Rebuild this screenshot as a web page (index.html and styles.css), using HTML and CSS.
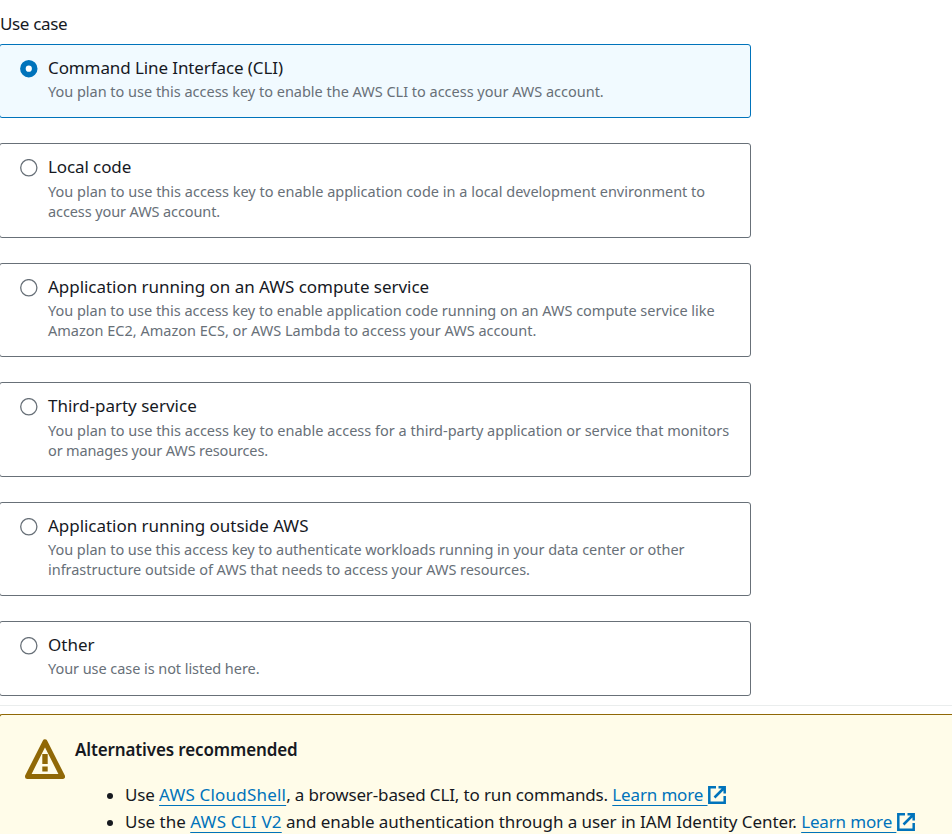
FILE: index.html
```html
<!DOCTYPE html>
<html lang="en">
<head>
<meta charset="utf-8">
<title>Access key use case</title>
<link rel="stylesheet" href="styles.css">
</head>
<body>
<main class="page">
  <div class="field-label">Use case</div>
  <div class="tiles">
    <div class="tile selected">
      <svg class="radio" viewBox="0 0 18 18"><circle cx="8.800" cy="8.700" r="5.900" fill="#fff" stroke="#0073bb" stroke-width="5.600"/></svg>
      <div class="copy">
        <div class="title tight">Command Line Interface (CLI)</div>
        <div class="desc slight">You plan to use this access key to enable the AWS CLI to access your AWS account.</div>
      </div>
    </div>
    <div class="tile">
      <svg class="radio" viewBox="0 0 18 18"><circle cx="8.800" cy="8.700" r="8.100" fill="#fff" stroke="#687078" stroke-width="1.300"/></svg>
      <div class="copy">
        <div class="title tight">Local code</div>
        <div class="desc">You plan to use this access key to enable application code in a local development environment to<br><span class="tight">access your AWS account.</span></div>
      </div>
    </div>
    <div class="tile">
      <svg class="radio" viewBox="0 0 18 18"><circle cx="8.800" cy="8.700" r="8.100" fill="#fff" stroke="#687078" stroke-width="1.300"/></svg>
      <div class="copy">
        <div class="title snug">Application running on an AWS compute service</div>
        <div class="desc"><span class="slight">You plan to use this access key to enable application code running on an AWS compute service like</span><br>Amazon EC2, Amazon ECS, or AWS Lambda to access your AWS account.</div>
      </div>
    </div>
    <div class="tile">
      <svg class="radio" viewBox="0 0 18 18"><circle cx="8.800" cy="8.700" r="8.100" fill="#fff" stroke="#687078" stroke-width="1.300"/></svg>
      <div class="copy">
        <div class="title">Third-party service</div>
        <div class="desc">You plan to use this access key to enable access for a third-party application or service that monitors<br><span class="tighter">or manages your AWS resources.</span></div>
      </div>
    </div>
    <div class="tile">
      <svg class="radio" viewBox="0 0 18 18"><circle cx="8.800" cy="8.700" r="8.100" fill="#fff" stroke="#687078" stroke-width="1.300"/></svg>
      <div class="copy">
        <div class="title snug">Application running outside AWS</div>
        <div class="desc snug">You plan to use this access key to authenticate workloads running in your data center or other<br>infrastructure outside of AWS that needs to access your AWS resources.</div>
      </div>
    </div>
    <div class="tile">
      <svg class="radio" viewBox="0 0 18 18"><circle cx="8.800" cy="8.700" r="8.100" fill="#fff" stroke="#687078" stroke-width="1.300"/></svg>
      <div class="copy">
        <div class="title">Other</div>
        <div class="desc close">Your use case is not listed here.</div>
      </div>
    </div>
  </div>
  <hr class="divider">
  <section class="alert">
    <svg class="warn" viewBox="0 0 40 40"><path d="M20 2.800 37.500 37.500h-35Z" fill="none" stroke="#906806" stroke-width="5" stroke-linejoin="round"/><path d="M17.300 15h5.400v10h-5.400zM17.300 27.500h5.400v5h-5.400z" fill="#906806"/></svg>
    <div class="alert-body">
      <h2>Alternatives recommended</h2>
      <ul>
        <li><span class="tighter">Use </span><a class="wide">AWS CloudShell</a><span class="tighter">, a browser-based CLI, to run commands. </span><a class="learn">Learn more&nbsp;</a><svg class="external" viewBox="0 0 18 18"><path d="M8 1.300H1.300v15.400h15.400V10M10.500 1.300h6.200v6.200M16.500 1.500 6.500 11.500" fill="none" stroke="#0073bb" stroke-width="2.500"/></svg></li>
        <li><span>Use the </span><a class="wide">AWS CLI V2</a><span class="close"> and enable authentication through a user in IAM Identity Center. </span><a class="learn">Learn more&nbsp;</a><svg class="external" viewBox="0 0 18 18"><path d="M8 1.300H1.300v15.400h15.400V10M10.500 1.300h6.200v6.200M16.500 1.500 6.500 11.500" fill="none" stroke="#0073bb" stroke-width="2.500"/></svg></li>
      </ul>
    </div>
  </section>
</main>
</body>
</html>
```
FILE: styles.css
```css
body{margin:0;background:#fff;color:#16191f;font:17px/25px "Noto Sans",sans-serif}
.page{height:834px;overflow:hidden}
.field-label{height:43.75px;padding-top:11px;box-sizing:border-box;letter-spacing:-.35px}
.tiles{display:flex;flex-direction:column;gap:25px}
.tile{display:flex;box-sizing:border-box;width:752px;margin-left:-1px;padding:10px 20px 16.2px;border:1px solid #687078;border-radius:3px}
.selected{background:#f1faff;border-color:#0073bb}
.radio{flex:none;width:18px;height:18px;margin:5px 10px 0 0}
.title{margin-bottom:1.3px}
.desc{font-size:14.5px;line-height:20px;color:#687078;white-space:nowrap}
.slight{letter-spacing:-.015px}
.snug{letter-spacing:-.035px}
.close{letter-spacing:-.06px}
.tight{letter-spacing:-.1px}
.tighter{letter-spacing:-.14px}
.wide{letter-spacing:.2px}
.divider{margin:9.25px 0 8px;border:0;border-top:1px solid #eaeded}
.alert{display:flex;height:200px;margin-left:-1px;background:#fffce9;border:1px solid #906806;border-width:1px 0 1px 1px;border-radius:3px 0 0 3px;padding:22px 25px}
.warn{flex:none;width:40px;height:40px;margin:2px 10px 0 0}
h2{font-size:17px;line-height:25px;margin:0;font-weight:600;letter-spacing:-.13px}
ul{margin:19px 0 0;padding:0 0 0 50px;list-style:none}
li{position:relative;line-height:27px;white-space:nowrap}
li::before{content:"";position:absolute;left:-18.500px;top:12px;width:6px;height:6px;border-radius:50%;background:#16191f}
a{color:#0073bb;text-decoration:underline 1px;text-underline-offset:4px;text-decoration-skip-ink:none}
.learn{letter-spacing:-.15px}
.external{width:18px;height:18px;margin-left:.4px;vertical-align:-3px}
```
